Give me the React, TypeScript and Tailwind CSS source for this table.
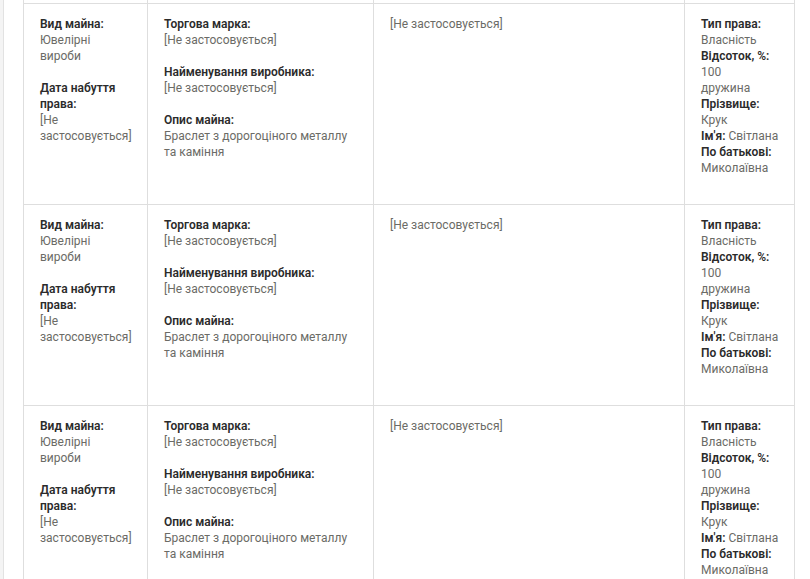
import React from "react";

const L = "font-semibold text-[#2b2b2b]";
const V = "text-[#6b6b66]";

function Lines({ lines, cls }: { lines: string[]; cls: string }) {
  return (
    <>
      {lines.map((t, i) => (
        <div key={i} className={`${cls} whitespace-nowrap`}>
          {t}
        </div>
      ))}
    </>
  );
}

function Field({ label, value, last }: { label: string[]; value: string[]; last?: boolean }) {
  return (
    <div className={last ? "" : "mb-4"}>
      <Lines lines={label} cls={L} />
      <Lines lines={value} cls={V} />
    </div>
  );
}

function Row() {
  return (
    <div className="flex h-[201px] shrink-0 border-t border-[#dedede]">
      <div className="w-[124px] shrink-0 border-l border-[#dedede] pl-4 pt-[12px]">
        <Field label={["Вид майна:"]} value={["Ювелірні", "вироби"]} />
        <Field label={["Дата набуття", "права:"]} value={["[Не", "застосовується]"]} last />
      </div>
      <div className="w-[226px] shrink-0 border-l border-[#dedede] pl-4 pt-[12px]">
        <Field label={["Торгова марка:"]} value={["[Не застосовується]"]} />
        <Field label={["Найменування виробника:"]} value={["[Не застосовується]"]} />
        <Field label={["Опис майна:"]} value={["Браслет з дорогоціного металлу", "та каміння"]} last />
      </div>
      <div className="w-[311px] shrink-0 border-l border-[#dedede] pl-4 pt-[12px]">
        <div className={V}>[Не застосовується]</div>
      </div>
      <div className="w-[111px] shrink-0 border-l border-r border-[#dedede] pl-4 pt-[12px]">
        <div className={L}>Тип права:</div>
        <div className={V}>Власність</div>
        <div className={L}>Відсоток, %:</div>
        <div className={V}>100</div>
        <div className={V}>дружина</div>
        <div className={L}>Прізвище:</div>
        <div className={V}>Крук</div>
        <div className="whitespace-nowrap">
          <span className={L}>Ім'я:</span> <span className={V}>Світлана</span>
        </div>
        <div className={`${L} whitespace-nowrap`}>По батькові:</div>
        <div className={V}>Миколаївна</div>
      </div>
    </div>
  );
}

export default function App() {
  return (
    <div className="flex h-[579px] w-[810px] overflow-hidden bg-white font-['Roboto',sans-serif] text-[12px] leading-4">
      <div className="w-[3px] shrink-0 bg-[#f4f4f4]" />
      <div className="w-[20px] shrink-0 border-l border-[#e2e2e2]" />
      <div className="flex w-[772px] shrink-0 flex-col">
        <div className="flex h-[3px] shrink-0">
          <div className="w-[124px] shrink-0 border-l border-[#dedede]" />
          <div className="w-[226px] shrink-0 border-l border-[#dedede]" />
          <div className="w-[311px] shrink-0 border-l border-[#dedede]" />
          <div className="w-[111px] shrink-0 border-l border-r border-[#dedede]" />
        </div>
        <Row />
        <Row />
        <Row />
      </div>
    </div>
  );
}
